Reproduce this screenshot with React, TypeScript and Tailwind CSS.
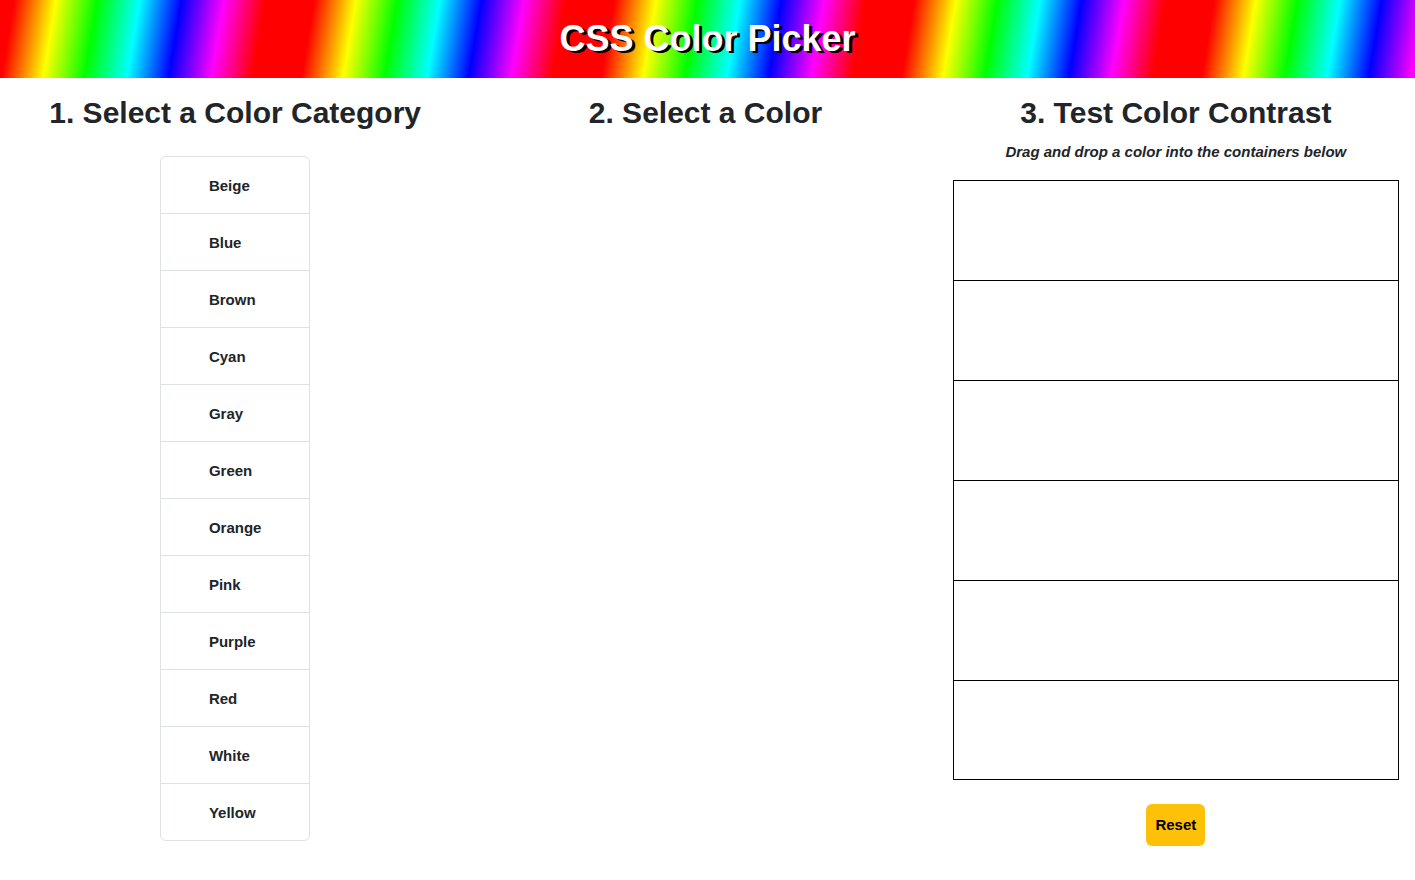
import { useState } from "react";

const categories = [
  "Beige",
  "Blue",
  "Brown",
  "Cyan",
  "Gray",
  "Green",
  "Orange",
  "Pink",
  "Purple",
  "Red",
  "White",
  "Yellow",
];

const emptyZones = ["", "", "", "", "", ""];

function CategoryList({ onSelect }: { onSelect: (name: string) => void }) {
  return (
    <ul className="mt-6 divide-y divide-[#dee2e6] rounded-md border border-[#dee2e6]">
      {categories.map((name) => (
        <li key={name}>
          <button
            type="button"
            onClick={() => onSelect(name)}
            className="block w-full cursor-pointer px-12 pt-[17px] pb-[15px] text-left leading-6 font-bold"
          >
            {name}
          </button>
        </li>
      ))}
    </ul>
  );
}

function ContrastZones({ colors, onDrop }: { colors: string[]; onDrop: (index: number, color: string) => void }) {
  return (
    <div className="mt-4 w-full divide-y divide-black border border-black">
      {colors.map((color, index) => (
        <div
          key={index}
          className="h-[100px] last:h-[98px]"
          style={{ backgroundColor: color || undefined }}
          onDragOver={(event) => event.preventDefault()}
          onDrop={(event) => onDrop(index, event.dataTransfer.getData("text"))}
        />
      ))}
    </div>
  );
}

export default function App() {
  const [, setCategory] = useState("");
  const [zones, setZones] = useState(emptyZones);

  return (
    <div className="min-h-screen bg-white font-['Franklin_Gothic_Medium','Liberation_Sans',sans-serif] text-[15px] font-bold text-[#212529]">
      <header className="bg-[repeating-linear-gradient(99.4deg,#f00_0px,#f00_14px,#ff0_55px,#0f0_96px,#0ff_138px,#00f_179px,#f0f_221px,#f00_262px,#f00_296px)] py-4 text-center">
        <h1 className="text-4xl leading-[46px] font-bold text-white [text-shadow:3px_2px_0_#000]">
          CSS Color Picker
        </h1>
      </header>

      <main className="grid grid-cols-3 pt-4 pr-1">
        <section className="flex flex-col items-center px-3">
          <h2 className="text-[30px] leading-[38px]">1. Select a Color Category</h2>
          <CategoryList onSelect={setCategory} />
        </section>

        <section className="flex flex-col items-center px-3">
          <h2 className="text-[30px] leading-[38px]">2. Select a Color</h2>
        </section>

        <section className="flex flex-col items-center px-3">
          <h2 className="text-[30px] leading-[38px]">3. Test Color Contrast</h2>
          <p className="mt-2 leading-6 italic">Drag and drop a color into the containers below</p>
          <ContrastZones
            colors={zones}
            onDrop={(index, color) => setZones(zones.map((old, i) => (i === index ? color : old)))}
          />
          <button
            type="button"
            onClick={() => setZones(emptyZones)}
            className="mt-6 cursor-pointer rounded-md bg-[#ffc107] px-[9px] py-2 leading-[26px] font-bold text-black"
          >
            Reset
          </button>
        </section>
      </main>
    </div>
  );
}
